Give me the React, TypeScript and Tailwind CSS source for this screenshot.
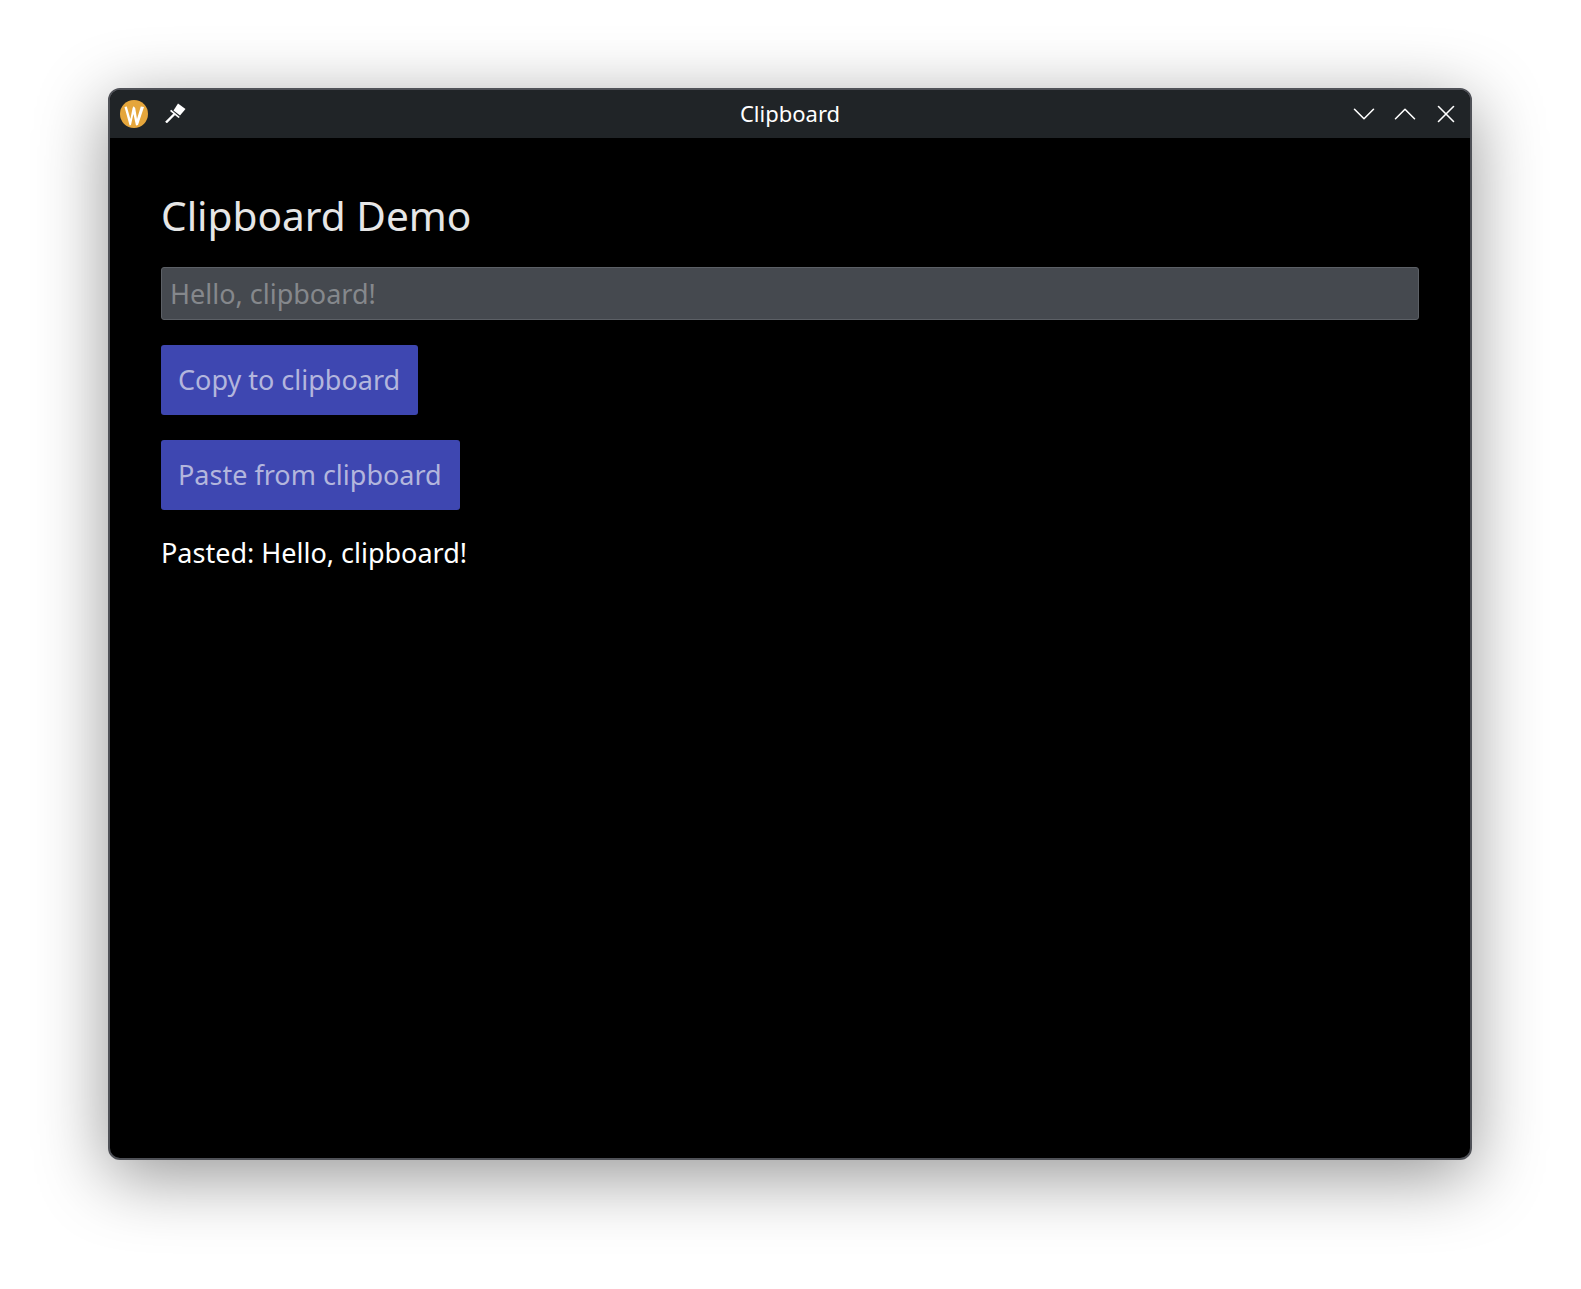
import { ChevronDown, ChevronUp, X } from 'lucide-react';

function WaylandLogo() {
  return (
    <svg width="28" height="28" viewBox="0 0 28 28">
      <circle cx="14" cy="14" r="14" fill="#e5a63c" />
      <path d="M4.5 7 L6.8 6.4 L10.4 19 L12.6 8 L13.6 6.2 L15.2 8 L17 19 L20.8 6.4 L24 7 L18 25 L16 25.5 L13.4 14 L11 25 L9.6 25.5 Z" fill="#fff" />
    </svg>
  );
}

function PinIcon() {
  return (
    <svg width="21" height="20" viewBox="0 0 21 20">
      <path d="M13 0.5 L20.5 6 L15 12.5 L8.5 7.5 Z" fill="#fff" />
      <path d="M6.2 6.8 L14.8 14 L13.5 15 L5 8 Z" fill="#fff" />
      <path d="M9.5 11 L1 19.5" stroke="#fff" strokeWidth="2.4" fill="none" />
    </svg>
  );
}

export default function App() {
  return (
    <div className="min-h-[1289px] bg-white pt-[88px] pl-[108px] font-['Noto_Sans',sans-serif]">
      <div className="w-[1364px] h-[1072px] rounded-[12px] bg-black border-2 border-[#4f5157] overflow-hidden shadow-[0_16px_70px_rgba(0,0,0,0.42)] flex flex-col">
        <div className="h-[48px] shrink-0 bg-[#202427] grid grid-cols-[1fr_auto_1fr] items-center pb-[1px]">
          <div className="flex items-center pl-[10px]">
            <WaylandLogo />
            <div className="ml-[17px] mb-[2px]">
              <PinIcon />
            </div>
          </div>
          <div className="text-center text-white text-[22px]">Clipboard</div>
          <div className="flex items-center justify-end text-white">
            <div className="w-[40px] flex justify-center">
              <ChevronDown size={38} strokeWidth={1} />
            </div>
            <div className="w-[41px] flex justify-center">
              <ChevronUp size={38} strokeWidth={1} />
            </div>
            <div className="w-[41px] mr-[4px] flex justify-center">
              <X size={30} strokeWidth={1.3} />
            </div>
          </div>
        </div>
        <div className="flex-1 px-[51px] pt-[49px] flex flex-col items-start">
          <h1 className="text-[40.6px] leading-[58px] text-[#e6e6e6]">Clipboard Demo</h1>
          <div className="mt-[22px] w-full h-[53px] bg-[#45494f] border border-[#5c6066] rounded-[3px] pl-[8px] pt-[1px] flex items-center text-[27px] text-[#85888c]">
            Hello, clipboard!
          </div>
          <button className="mt-[25px] h-[70px] pl-[17px] pr-[18px] bg-[#3e47b1] rounded-[3px] text-[27px] text-[#b3b6dd]">
            Copy to clipboard
          </button>
          <button className="mt-[25px] h-[70px] pl-[17px] pr-[18px] bg-[#3e47b1] rounded-[3px] text-[27px] text-[#b3b6dd]">
            Paste from clipboard
          </button>
          <p className="mt-[24px] text-[27px] leading-[38px] text-white">Pasted: Hello, clipboard!</p>
        </div>
      </div>
    </div>
  );
}
